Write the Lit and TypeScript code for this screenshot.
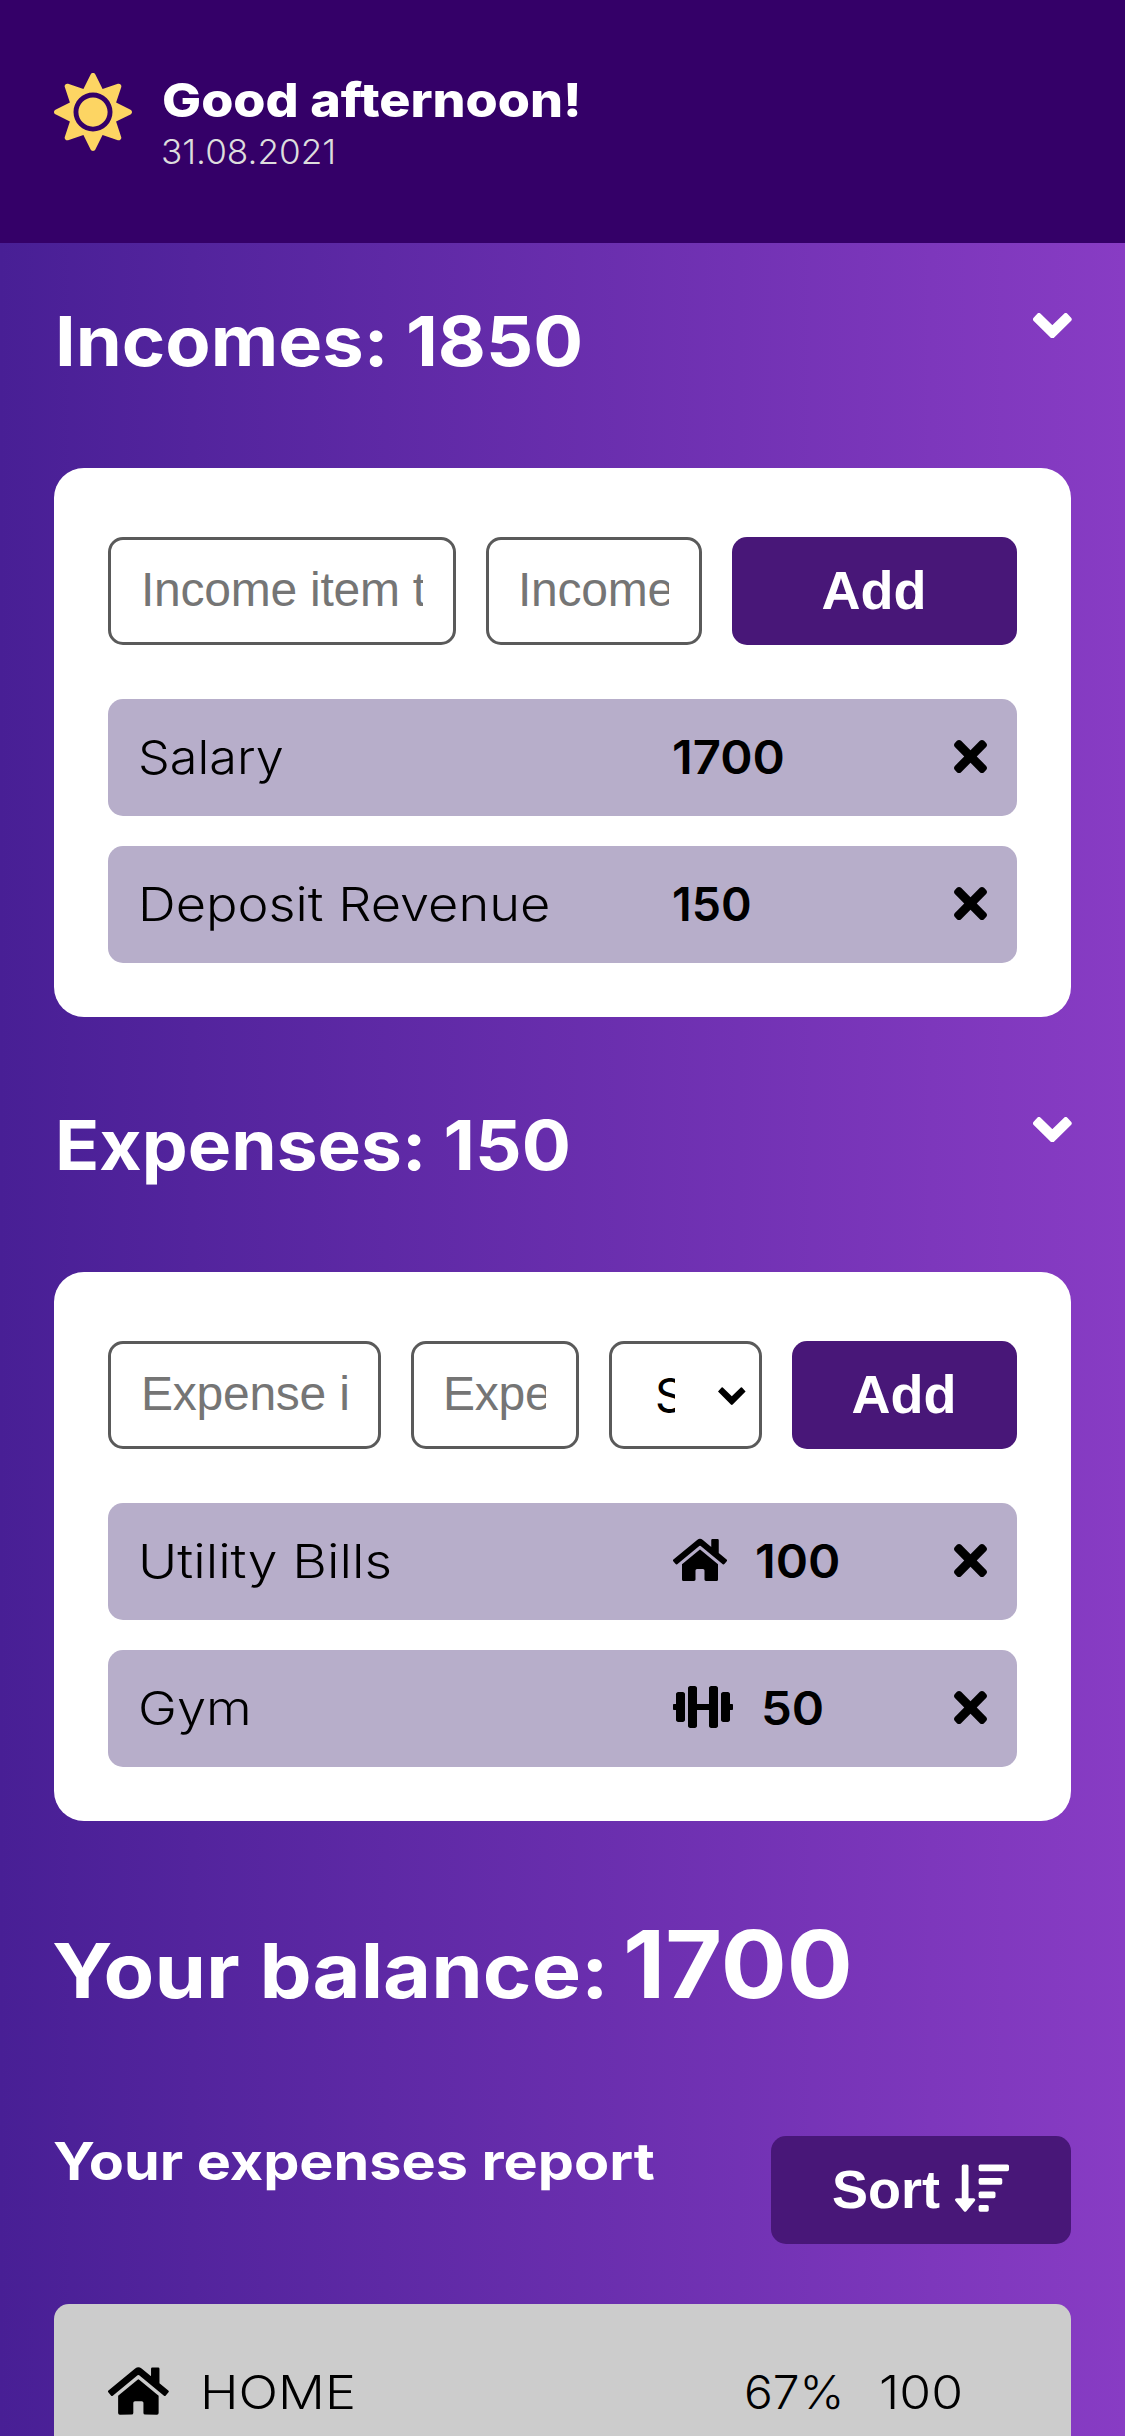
import { LitElement, html, css, svg, nothing } from "lit";
import { customElement, property } from "lit/decorators.js";

const ICONS = {
  sun: {
    box: "0 0 512 512",
    body: svg`<path d="M256 160c-52.9 0-96 43.1-96 96s43.1 96 96 96 96-43.1 96-96-43.1-96-96-96zm246.4 80.5l-94.7-47.3 33.5-100.4c4.5-13.6-8.4-26.5-21.9-21.9l-100.4 33.5-47.4-94.8c-6.4-12.8-24.6-12.8-31 0l-47.3 94.7L92.7 70.8c-13.6-4.5-26.5 8.4-21.9 21.9l33.5 100.4-94.7 47.4c-12.8 6.4-12.8 24.6 0 31l94.7 47.3-33.5 100.5c-4.5 13.6 8.4 26.5 21.9 21.9l100.4-33.5 47.3 94.7c6.4 12.8 24.6 12.8 31 0l47.3-94.7 100.4 33.5c13.6 4.5 26.5-8.4 21.9-21.9l-33.5-100.4 94.7-47.3c13-6.5 13-24.7.2-31.1zm-155.9 106c-49.9 49.9-131.1 49.9-181 0-49.9-49.9-49.9-131.1 0-181 49.9-49.9 131.1-49.9 181 0 49.9 49.9 49.9 131.1 0 181z"/>`,
  },
  chevron: {
    box: "0 0 116 76",
    body: svg`<path stroke="currentColor" stroke-width="14" stroke-linejoin="round" d="M7 19L18 7l40 39L98 7l11 12-51 50z"/>`,
  },
  caret: {
    box: "0 0 27.6 18",
    body: svg`<path d="M0 4.4L3.6.6Q4.2 0 4.8.6l9 8.7 9-8.7q.6-.6 1.2 0l3.6 3.8-12.9 13.1q-.9.8-1.8 0z"/>`,
  },
  cross: {
    box: "0 80 352 352",
    body: svg`<path d="M242.72 256l100.07-100.07c12.28-12.28 12.28-32.19 0-44.48l-22.24-22.24c-12.28-12.28-32.19-12.28-44.48 0L176 189.28 75.93 89.21c-12.28-12.28-32.19-12.28-44.48 0L9.21 111.45c-12.28 12.28-12.28 32.19 0 44.48L109.28 256 9.21 356.07c-12.28 12.28-12.28 32.19 0 44.48l22.24 22.24c12.28 12.28 32.2 12.28 44.48 0L176 322.72l100.07 100.07c12.28 12.28 32.2 12.28 44.48 0l22.24-22.24c12.28-12.28 12.28-32.19 0-44.48L242.72 256z"/>`,
  },
  home: {
    box: "0 0 576 512",
    body: svg`<path d="M280.37 148.26L96 300.11V464a16 16 0 0 0 16 16l112.06-.29a16 16 0 0 0 15.92-16V368a16 16 0 0 1 16-16h64a16 16 0 0 1 16 16v95.64a16 16 0 0 0 16 16.05L464 480a16 16 0 0 0 16-16V300L295.67 148.26a12.19 12.19 0 0 0-15.3 0zM571.6 251.47L488 182.56V44.05a12 12 0 0 0-12-12h-56a12 12 0 0 0-12 12v72.61L318.47 43a48 48 0 0 0-61 0L4.34 251.47a12 12 0 0 0-1.6 16.9l25.5 31A12 12 0 0 0 45.15 301l235.22-193.74a12.19 12.19 0 0 1 15.3 0L530.9 301a12 12 0 0 0 16.9-1.6l25.5-31a12 12 0 0 0-1.7-16.93z"/>`,
  },
  dumbbell: {
    box: "0 0 640 512",
    body: svg`<path d="M104 96H56c-13.3 0-24 10.7-24 24v104H8c-4.4 0-8 3.6-8 8v48c0 4.4 3.6 8 8 8h24v104c0 13.3 10.7 24 24 24h48c13.3 0 24-10.7 24-24V120c0-13.3-10.7-24-24-24zm528 128h-24V120c0-13.3-10.7-24-24-24h-48c-13.3 0-24 10.7-24 24v272c0 13.3 10.7 24 24 24h48c13.3 0 24-10.7 24-24V288h24c4.4 0 8-3.6 8-8v-48c0-4.4-3.6-8-8-8zM456 32h-48c-13.3 0-24 10.7-24 24v168H256V56c0-13.3-10.7-24-24-24h-48c-13.3 0-24 10.7-24 24v400c0 13.3 10.7 24 24 24h48c13.3 0 24-10.7 24-24V288h128v168c0 13.3 10.7 24 24 24h48c13.3 0 24-10.7 24-24V56c0-13.3-10.7-24-24-24z"/>`,
  },
  sort: {
    box: "0 0 512 512",
    body: svg`<path d="M304 416h-64a16 16 0 0 0-16 16v32a16 16 0 0 0 16 16h64a16 16 0 0 0 16-16v-32a16 16 0 0 0-16-16zm-128-64h-48V48a16 16 0 0 0-16-16H80a16 16 0 0 0-16 16v304H16c-14.19 0-21.37 17.24-11.29 27.31l80 96a16 16 0 0 0 22.62 0l80-96C197.35 369.26 190.22 352 176 352zm256-192H240a16 16 0 0 0-16 16v32a16 16 0 0 0 16 16h192a16 16 0 0 0 16-16v-32a16 16 0 0 0-16-16zm-64 128H240a16 16 0 0 0-16 16v32a16 16 0 0 0 16 16h128a16 16 0 0 0 16-16v-32a16 16 0 0 0-16-16zM496 32H240a16 16 0 0 0-16 16v32a16 16 0 0 0 16 16h256a16 16 0 0 0 16-16V48a16 16 0 0 0-16-16z"/>`,
  },
};

type IconName = keyof typeof ICONS;

const icon = (name: IconName, cls: string) => html`
  <svg class=${cls} viewBox=${ICONS[name].box} fill="currentColor" aria-hidden="true">${ICONS[name].body}</svg>
`;

interface Entry {
  title: string;
  titleClass: string;
  amount: number;
  amountClass: string;
  category?: IconName;
}

const INCOMES: Entry[] = [
  { title: "Salary", titleClass: "snug", amount: 1700, amountClass: "open" },
  { title: "Deposit Revenue", titleClass: "wide", amount: 150, amountClass: "tight" },
];

const EXPENSES: Entry[] = [
  { title: "Utility Bills", titleClass: "wider", amount: 100, amountClass: "open", category: "home" },
  { title: "Gym", titleClass: "wide", amount: 50, amountClass: "open", category: "dumbbell" },
];

@customElement("entry-list")
class EntryList extends LitElement {
  @property({ attribute: false }) entries: Entry[] = [];

  static styles = css`
    :host {
      display: flex;
      flex-direction: column;
      gap: 30px;
    }
    .row {
      display: grid;
      grid-template-columns: 535px 1fr 33px;
      align-items: center;
      height: 117px;
      padding: 0 30px;
      border-radius: 15px;
      background: #b7aeca;
      color: #000;
      font: 320 46.5px/117px Inter, "Liberation Sans", sans-serif;
      white-space: nowrap;
    }
    .title,
    .amount {
      justify-self: start;
      transform-origin: 0 50%;
    }
    .value {
      display: flex;
      align-items: center;
      gap: 28px;
    }
    .amount {
      font-weight: 580;
    }
    .amount:first-child {
      margin-left: -1px;
    }
    .open {
      transform: scaleX(1.055);
    }
    .snug {
      transform: scaleX(1.083);
    }
    .wide {
      transform: scaleX(1.126);
    }
    .wider {
      transform: scaleX(1.148);
    }
    .home,
    .dumbbell {
      height: 48px;
      margin-bottom: 3px;
    }
    .home {
      width: 54px;
    }
    .dumbbell {
      width: 60px;
    }
    .cross {
      width: 33px;
      height: 33px;
      margin-bottom: 3px;
    }
  `;

  render() {
    return this.entries.map(
      (e) => html`
        <div class="row">
          <span class="title ${e.titleClass}">${e.title}</span>
          <span class="value">
            ${e.category ? icon(e.category, e.category) : nothing}
            <span class="amount ${e.amountClass}">${e.amount}</span>
          </span>
          ${icon("cross", "cross")}
        </div>
      `
    );
  }
}

@customElement("app-root")
class AppRoot extends LitElement {
  static styles = css`
    :host {
      display: block;
      box-sizing: border-box;
      height: 2436px;
      overflow: hidden;
      background: linear-gradient(90deg, #481f95, #883cc4);
      color: #fff;
      font-family: Inter, "Liberation Sans", sans-serif;
      white-space: nowrap;
    }
    * {
      box-sizing: border-box;
    }
    h1,
    h2,
    h3,
    p {
      margin: 0;
    }
    .greeting,
    .date,
    .section-title,
    .label,
    .total,
    .report-title,
    .name,
    .percent,
    .sum {
      transform-origin: 0 50%;
    }
    .header {
      display: flex;
      align-items: flex-start;
      gap: 30px;
      height: 243px;
      padding: 71px 54px 0;
      background: #340068;
    }
    .sun {
      width: 78px;
      height: 78px;
      margin-top: 2px;
      color: #fdd563;
    }
    .greeting {
      font-size: 47px;
      line-height: 58px;
      font-weight: 800;
      transform: scaleX(1.107);
    }
    .date {
      margin: 1px 0 0 -1px;
      color: #ddd;
      font-size: 34px;
      line-height: 44px;
      font-weight: 320;
      transform: scaleX(1.033);
    }
    .main {
      padding: 0 54px;
    }
    .section-head {
      display: flex;
      justify-content: space-between;
      align-items: flex-start;
      padding: 53px 0 82px;
    }
    .section-head.second {
      padding-top: 83px;
    }
    .section-title {
      margin-left: 1px;
      font-size: 69px;
      line-height: 90px;
      font-weight: 700;
      transform: scaleX(1.072);
    }
    .second .section-title {
      transform: scaleX(1.058);
    }
    .chevron {
      width: 38.7px;
      height: 25.4px;
      margin: 17px -1px 0 0;
    }
    .card {
      height: 549px;
      padding: 69px 54px 54px;
      border-radius: 30px;
      background: #fff;
    }
    .form {
      display: grid;
      grid-template-columns: 348px 216px 285px;
      gap: 30px;
      height: 108px;
      margin-bottom: 54px;
    }
    .form.four {
      grid-template-columns: 273px 168px 153px 225px;
    }
    .input {
      width: 100%;
      height: 108px;
      margin: 0;
      padding: 0 30px 3px;
      border: 3px solid #5a5a5a;
      border-radius: 15px;
      outline: none;
      background: #fff;
      font: 48px "Liberation Sans", Arial, sans-serif;
      letter-spacing: -0.25px;
    }
    .input + .input {
      padding-left: 29px;
    }
    .input::placeholder {
      color: #757575;
      opacity: 1;
    }
    .select {
      display: flex;
      align-items: center;
      padding-left: 42px;
      border: 3px solid #5a5a5a;
      border-radius: 15px;
      background: #fff;
      color: #000;
    }
    .choice {
      width: 21px;
      overflow: hidden;
      font-size: 46.5px;
      line-height: 102px;
      font-weight: 400;
      text-indent: 1px;
    }
    .caret {
      flex: none;
      width: 27.6px;
      height: 18px;
      margin: 2px 0 0 43px;
    }
    .button {
      display: flex;
      align-items: center;
      justify-content: center;
      gap: 15px;
      height: 108px;
      padding: 0 1px 3px 0;
      border: 0;
      border-radius: 15px;
      background: #481778;
      color: #fff;
      font: bold 54px "Liberation Sans", Arial, sans-serif;
    }
    .balance {
      display: flex;
      align-items: baseline;
      gap: 61px;
      height: 110px;
      margin: 88px 0 0 -2px;
      line-height: 110px;
      font-size: 76px;
      font-weight: 700;
    }
    .label {
      transform: scaleX(1.091);
    }
    .total {
      font-size: 94px;
      transform: scaleX(1.042);
    }
    .report-head {
      display: flex;
      justify-content: space-between;
      align-items: flex-start;
      margin: 110px 0 60px;
    }
    .report-title {
      margin-left: -1px;
      font-size: 52px;
      line-height: 66px;
      font-weight: 700;
      transform: scaleX(1.105);
    }
    .sort-button {
      width: 300px;
      margin-top: 7px;
    }
    .sort {
      width: 54px;
      height: 54px;
      margin-bottom: 2px;
    }
    .report {
      display: grid;
      grid-template-columns: 92px 544px 135px auto;
      align-items: start;
      justify-items: start;
      height: 183px;
      padding: 58px 54px 0;
      border-radius: 15px;
      background: #ccc;
      color: #000;
      font-size: 46.5px;
      line-height: 60px;
      font-weight: 320;
    }
    .category {
      width: 60.75px;
      height: 54px;
      margin-top: 2px;
    }
    .name {
      transform: scaleX(1.12);
    }
    .percent {
      transform: scaleX(1.03);
    }
    .sum {
      transform: scaleX(1.11);
    }
  `;

  render() {
    return html`
      <header class="header">
        ${icon("sun", "sun")}
        <div>
          <h1 class="greeting">Good afternoon!</h1>
          <p class="date">31.08.2021</p>
        </div>
      </header>
      <main class="main">
        <section>
          <div class="section-head">
            <h2 class="section-title">Incomes: 1850</h2>
            ${icon("chevron", "chevron")}
          </div>
          <div class="card">
            <div class="form">
              <input class="input" placeholder="Income item title" />
              <input class="input" placeholder="Income amount" />
              <button class="button">Add</button>
            </div>
            <entry-list .entries=${INCOMES}></entry-list>
          </div>
        </section>
        <section>
          <div class="section-head second">
            <h2 class="section-title">Expenses: 150</h2>
            ${icon("chevron", "chevron")}
          </div>
          <div class="card">
            <div class="form four">
              <input class="input" placeholder="Expense item title" />
              <input class="input" placeholder="Expense amount" />
              <div class="select">
                <span class="choice">S</span>
                ${icon("caret", "caret")}
              </div>
              <button class="button">Add</button>
            </div>
            <entry-list .entries=${EXPENSES}></entry-list>
          </div>
        </section>
        <h2 class="balance"><span class="label">Your balance:</span><span class="total">1700</span></h2>
        <section>
          <div class="report-head">
            <h3 class="report-title">Your expenses report</h3>
            <button class="button sort-button"><span>Sort</span>${icon("sort", "sort")}</button>
          </div>
          <div class="report">
            ${icon("home", "category")}
            <span class="name">HOME</span>
            <span class="percent">67%</span>
            <span class="sum">100</span>
          </div>
        </section>
      </main>
    `;
  }
}
